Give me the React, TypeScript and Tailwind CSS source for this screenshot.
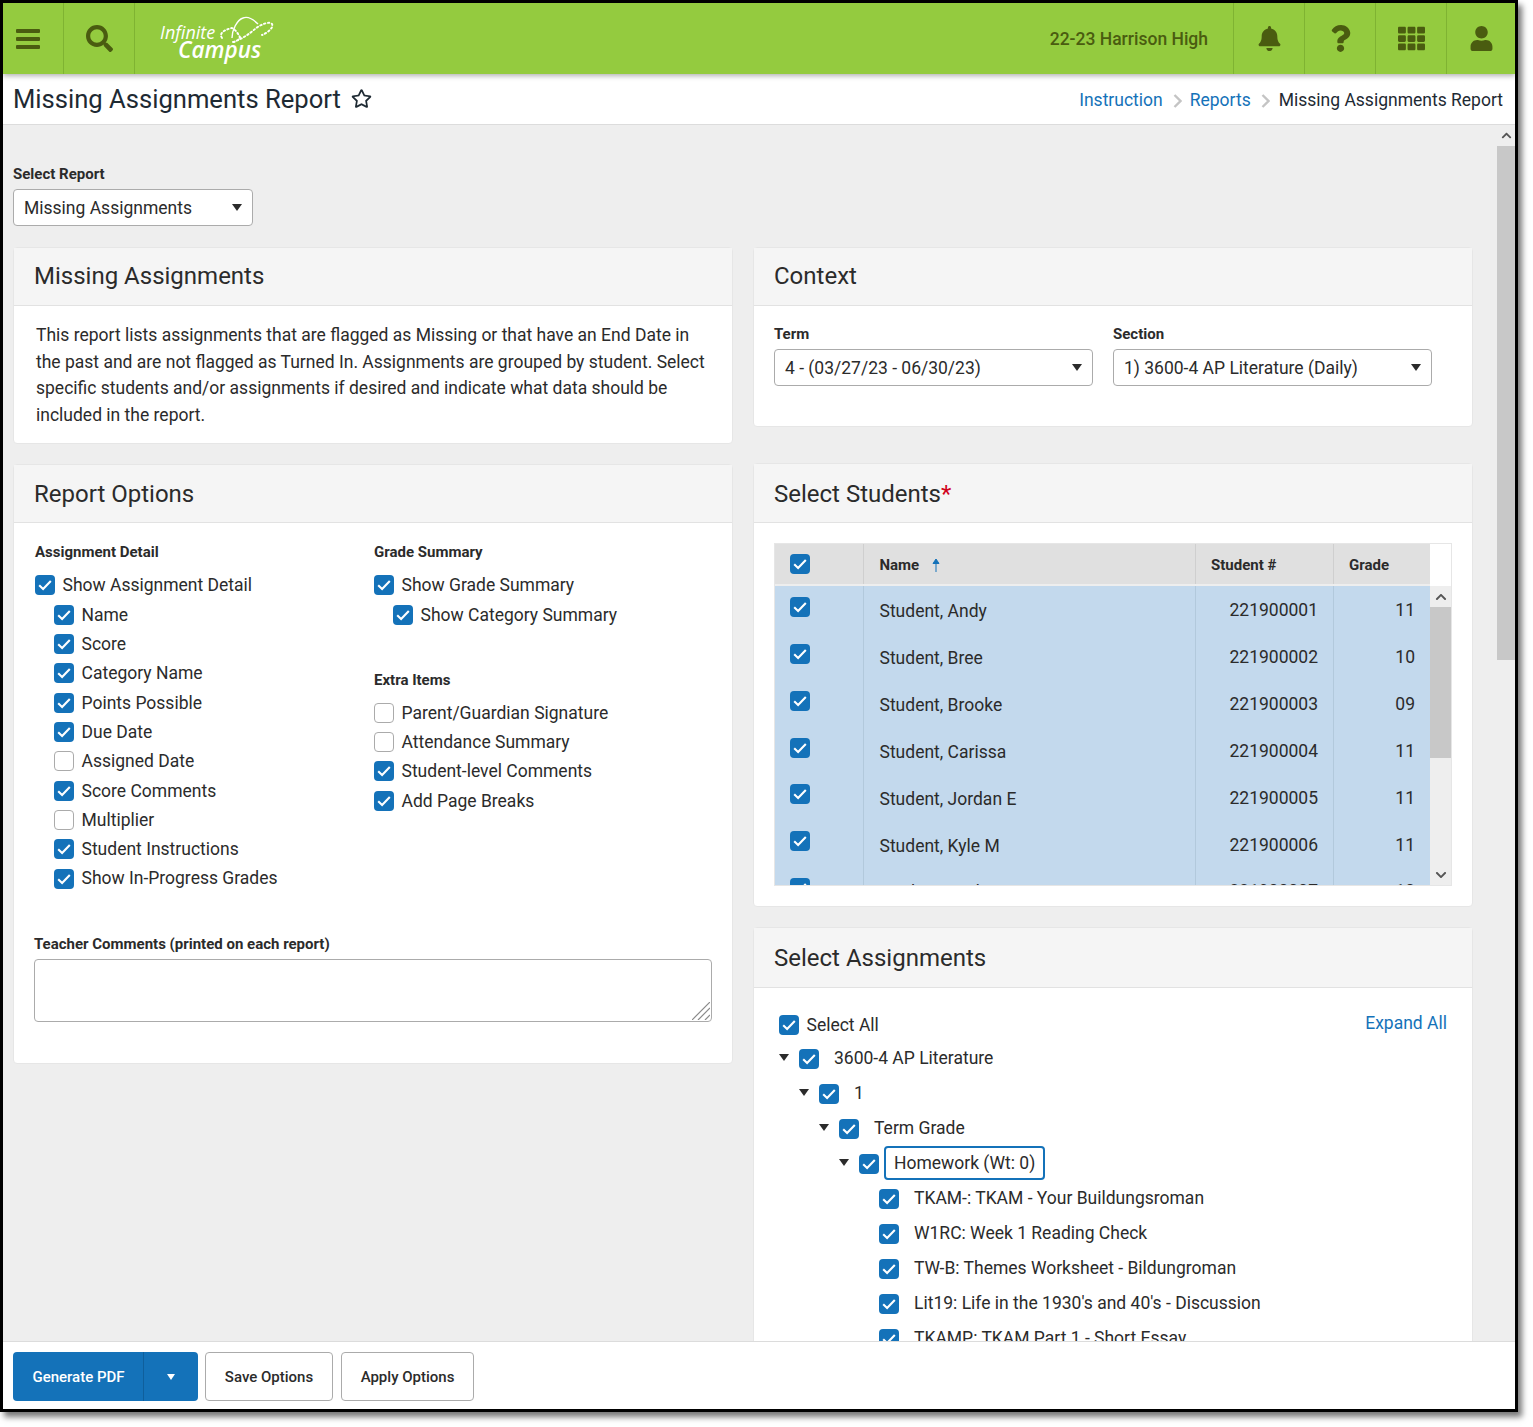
import {
  FaBell,
  FaChevronDown,
  FaChevronUp,
  FaQuestion,
  FaRegStar,
  FaSearch,
  FaTh,
  FaUser,
} from "react-icons/fa";
import type { ReactNode } from "react";

const Check = ({ on = true, className = "" }: { on?: boolean; className?: string }) => (
  <span
    className={`flex h-5 w-5 shrink-0 items-center justify-center rounded-[4px] ${
      on ? "bg-[#1472b9]" : "border border-[#ababab] bg-white"
    } ${className}`}
  >
    {on && (
      <svg viewBox="0 0 20 20" className="h-5 w-5">
        <path d="M4.2 10.3l3.9 3.7 7.7-8" fill="none" stroke="#fff" strokeWidth="2.1" />
      </svg>
    )}
  </span>
);

const Caret = ({ className = "" }: { className?: string }) => (
  <span
    className={`inline-block h-0 w-0 border-x-[5px] border-t-[7px] border-x-transparent border-t-[#2b2b2b] ${className}`}
  />
);

const Crumb = ({ className = "" }: { className?: string }) => (
  <svg viewBox="0 0 9 14" className={`h-[14px] w-[9px] ${className}`}>
    <path d="M1.5 1l6 6-6 6" fill="none" stroke="#c4c4c4" strokeWidth="2.4" />
  </svg>
);

const Select = ({ value, width }: { value: string; width: string }) => (
  <div
    className={`flex h-[37px] items-center justify-between rounded-[4px] border border-[#ababab] bg-white pl-[10px] pr-[10px] text-[17.5px] text-[#2b2b2b] ${width}`}
  >
    <span className="pt-px">{value}</span>
    <Caret />
  </div>
);

const Card = ({
  title,
  children,
  className = "",
  head = "h-[58px]",
}: {
  title: ReactNode;
  children: ReactNode;
  className?: string;
  head?: string;
}) => (
  <section className={`rounded-[4px] border border-[#e6e6e6] bg-white ${className}`}>
    <div className={`flex items-center border-b border-[#e2e2e2] bg-[#f5f5f5] px-5 text-[24px] text-[#2b2b2b] ${head}`}>
      {title}
    </div>
    {children}
  </section>
);

const Label = ({ children, className = "" }: { children: ReactNode; className?: string }) => (
  <div className={`text-[15px] font-bold leading-[18px] text-[#2b2b2b] ${className}`}>{children}</div>
);

const Opt = ({ label, on = true, sub = false }: { label: string; on?: boolean; sub?: boolean }) => (
  <div className={`flex h-[29.3px] items-center gap-[7.5px] text-[17.5px] text-[#2b2b2b] ${sub ? "pl-[19px]" : ""}`}>
    <Check on={on} />
    <span>{label}</span>
  </div>
);

const assignmentOpts: [string, boolean][] = [
  ["Name", true],
  ["Score", true],
  ["Category Name", true],
  ["Points Possible", true],
  ["Due Date", true],
  ["Assigned Date", false],
  ["Score Comments", true],
  ["Multiplier", false],
  ["Student Instructions", true],
  ["Show In-Progress Grades", true],
];

const students = [
  ["Student, Andy", "221900001", "11"],
  ["Student, Bree", "221900002", "10"],
  ["Student, Brooke", "221900003", "09"],
  ["Student, Carissa", "221900004", "11"],
  ["Student, Jordan E", "221900005", "11"],
  ["Student, Kyle M", "221900006", "11"],
  ["Student, Leah", "221900007", "10"],
];

const TreeRow = ({ indent, label, caret = false, focus = false }: { indent: string; label: string; caret?: boolean; focus?: boolean }) => (
  <div className={`flex h-[35px] items-center text-[17.5px] text-[#2b2b2b] ${indent}`}>
    <span className="flex w-5 shrink-0 items-center">{caret && <Caret className="-mt-[3px]" />}</span>
    <Check />
    {focus ? (
      <span className="-mt-[2px] ml-[5px] flex h-[34px] items-center rounded-[4px] border-2 border-[#1472b9] px-2">{label}</span>
    ) : (
      <span className="-mt-px ml-[15px]">{label}</span>
    )}
  </div>
);

const HeaderCell = ({ children, className = "" }: { children: ReactNode; className?: string }) => (
  <div className={`flex h-[71px] items-center justify-center border-l border-[#7fb332] ${className}`}>{children}</div>
);

const Logo = () => (
  <div className="relative ml-[25px] h-[71px] w-[120px] text-white" style={{ fontFamily: "'Open Sans', sans-serif" }}>
    <span className="absolute left-0 top-[23px] text-[18px] italic leading-[13px]">Infinite</span>
    <span className="absolute left-[18px] top-[38px] text-[22.5px] font-semibold italic leading-[18px]">Campus</span>
    <svg viewBox="0 0 62 32" className="absolute left-[55px] top-[11px] h-[32px] w-[62px]" fill="none" stroke="#fff">
      <path d="M17 24C17 16 22 6 28 4 33 2 39 6 43 10" strokeWidth="1.4" />
      <path
        d="M18 28C25 26 33 21 40 15 46 10 55 7 57 10 59 14 52 19 47 21M7 24C4 20 8 16 17 14 21 16 23 20 25 23 23 27 20 28 18 28"
        strokeWidth="1.9"
        strokeDasharray="1.5 2.5"
        strokeLinecap="round"
      />
    </svg>
  </div>
);

export default function App() {
  return (
    <div
      className="h-[1427px] w-[1533px] bg-white"
      style={{ fontFamily: "Roboto, 'Liberation Sans', sans-serif" }}
    >
      <div className="flex h-[1412px] w-[1518px] flex-col overflow-hidden border-[3px] border-black bg-white shadow-[4px_5px_6px_#777]">
        {/* top bar */}
        <header className="relative z-10 flex h-[71px] shrink-0 items-center bg-[#94cb3f] text-[#4a5c10] shadow-[0_2px_5px_rgba(0,0,0,0.3)]">
          <div className="flex h-[71px] w-[60px] items-center pl-[13px]">
            <svg viewBox="0 0 24 20" className="h-5 w-6" fill="currentColor">
              <rect width="24" height="4" rx="1" />
              <rect y="8" width="24" height="4" rx="1" />
              <rect y="16" width="24" height="4" rx="1" />
            </svg>
          </div>
          <HeaderCell className="w-[71px]">
            <FaSearch className="h-[27px] w-[27px]" />
          </HeaderCell>
          <HeaderCell className="w-auto">
            <Logo />
          </HeaderCell>
          <div className="ml-auto pr-[25px] pt-[2px] text-[17.5px] font-medium">22-23 Harrison High</div>
          <HeaderCell className="w-[71px]">
            <FaBell className="h-[25px] w-[25px]" />
          </HeaderCell>
          <HeaderCell className="w-[71px]">
            <FaQuestion className="h-[27px] w-[27px]" />
          </HeaderCell>
          <HeaderCell className="w-[71px]">
            <FaTh className="h-[27px] w-[27px]" />
          </HeaderCell>
          <HeaderCell className="w-[69px]">
            <FaUser className="h-[25px] w-[25px]" />
          </HeaderCell>
        </header>

        {/* title */}
        <div className="flex h-[51px] shrink-0 items-center justify-between border-b border-[#dcdcdc] bg-white pl-[10px] pr-[12px]">
          <div className="flex items-center gap-[10px] text-[25.6px] text-[#1e2a33]">
            <span>Missing Assignments Report</span>
            <FaRegStar className="h-[21px] w-[21px]" />
          </div>
          <div className="flex items-center pt-[3px] text-[17.5px]">
            <span className="text-[#1472b9]">Instruction</span>
            <Crumb className="ml-[10px] mr-[8px]" />
            <span className="text-[#1472b9]">Reports</span>
            <Crumb className="ml-[10px] mr-[9px]" />
            <span className="text-[#1e2a33]">Missing Assignments Report</span>
          </div>
        </div>

        {/* content */}
        <div className="flex min-h-0 flex-1 bg-[#eeeeee]">
          <main className="min-w-0 flex-1 overflow-hidden pl-[10px] pt-[40px]">
            <Label>Select Report</Label>
            <Select value="Missing Assignments" width="mt-[6px] w-[240px]" />
            <div className="mt-[21px] grid w-[1460px] grid-cols-2 items-start gap-x-5">
              <div className="flex flex-col gap-5">
                <Card title={<span className="-mt-[2px]">Missing Assignments</span>}>
                  <p className="px-[22px] pb-[14.7px] pt-[16.3px] text-[17.5px] leading-[26.4px] text-[#2b2b2b]">
                    This report lists assignments that are flagged as Missing or that have an End Date in the past and are not flagged as Turned In. Assignments are grouped by student. Select specific students and/or assignments if desired and indicate what data should be included in the report.
                  </p>
                </Card>
                <Card title={<span className="pt-px">Report Options</span>} className="h-[600px]">
                  <div className="px-5 pt-5">
                    <div className="grid grid-cols-2">
                      <div className="pl-px">
                        <Label>Assignment Detail</Label>
                        <div className="mt-[9.5px]">
                          <Opt label="Show Assignment Detail" />
                          <div className="mt-[0.8px]">
                            {assignmentOpts.map(([l, on]) => (
                              <Opt key={l} label={l} on={on} sub />
                            ))}
                          </div>
                        </div>
                      </div>
                      <div className="pl-px">
                        <Label>Grade Summary</Label>
                        <div className="mt-[9.5px]">
                          <Opt label="Show Grade Summary" />
                          <div className="mt-[0.8px]">
                            <Opt label="Show Category Summary" sub />
                          </div>
                        </div>
                        <Label className="mt-[41.7px]">Extra Items</Label>
                        <div className="mt-[9px]">
                          <Opt label="Parent/Guardian Signature" on={false} />
                          <Opt label="Attendance Summary" on={false} />
                          <Opt label="Student-level Comments" />
                          <Opt label="Add Page Breaks" />
                        </div>
                      </div>
                    </div>
                    <Label className="mt-[42.2px]">Teacher Comments (printed on each report)</Label>
                    <div className="relative mt-[5.5px] h-[63px] w-[678px]">
                      <textarea className="block h-full w-full resize-none rounded-[4px] border border-[#ababab] bg-white" />
                      <svg viewBox="0 0 18 18" className="absolute bottom-[2px] right-[2px] h-[18px] w-[18px]" stroke="#8a8a8a" strokeWidth="1.2">
                        <path d="M0 18L18 0M6 18L18 6M13 18L18 13" />
                      </svg>
                    </div>
                  </div>
                </Card>
              </div>

              <div className="flex flex-col gap-5">
                <Card title={<span className="-mt-[2px]">Context</span>} className="mb-4 h-[180px]">
                  <div className="grid grid-cols-2 px-5 pt-[19px]">
                    <div>
                      <Label>Term</Label>
                      <Select value="4 - (03/27/23 - 06/30/23)" width="mt-[6px] w-[319px]" />
                    </div>
                    <div>
                      <Label>Section</Label>
                      <Select value="1) 3600-4 AP Literature (Daily)" width="mt-[6px] w-[319px]" />
                    </div>
                  </div>
                </Card>

                <Card
                  title={<span className="pt-px">Select Students<span className="text-[#d0021b]">*</span></span>}
                  head="h-[59px]"
                  className="h-[444px]"
                >
                  <div className="px-5 pt-5">
                    <div className="flex h-[343px] w-[678px] border border-[#e6e6e6]">
                      <div className="min-w-0 flex-1">
                        <div className="flex h-[42px] items-center border-b-2 border-[#eeeeee] bg-[#e0e0e0] text-[15px] font-bold text-[#2b2b2b]">
                          <div className="flex h-full w-[89px] items-center border-r border-[#cfcfcf] pl-[15px]">
                            <Check />
                          </div>
                          <div className="flex h-full w-[332px] items-center gap-[12px] border-r border-[#cfcfcf] pl-[15.5px] pt-[2px]">
                            <span>Name</span>
                            <svg viewBox="0 0 10 14" className="h-[14px] w-[10px]">
                              <path d="M5 14V3M2 5.5L5 1l3 4.5z" stroke="#1472b9" fill="#1472b9" />
                            </svg>
                          </div>
                          <div className="flex h-full w-[138px] items-center border-r border-[#cfcfcf] pl-[15px] pt-[2px]">Student #</div>
                          <div className="pl-[15px] pt-[2px]">Grade</div>
                        </div>
                        <div className="h-[299px] overflow-hidden bg-[#c3d9ed] text-[17.5px] text-[#2b2b2b]">
                          {students.map(([name, id, grade]) => (
                            <div key={id} className="flex h-[46.85px]">
                              <div className="w-[89px] border-r border-[#b2c9dc] pl-[15px] pt-[11px]">
                                <Check />
                              </div>
                              <div className="flex w-[332px] items-center border-r border-[#b2c9dc] pl-[15.5px] pt-[4px]">{name}</div>
                              <div className="flex w-[138px] items-center justify-end border-r border-[#b2c9dc] pr-[15px] pt-[2px]">{id}</div>
                              <div className="flex flex-1 items-center justify-end pr-[15px] pt-[2px]">{grade}</div>
                            </div>
                          ))}
                        </div>
                      </div>
                      <div className="flex w-[21px] shrink-0 flex-col">
                        <div className="h-[42px] bg-white" />
                        <div className="flex h-[21px] items-center justify-center bg-[#eeeeee] text-[#555]">
                          <FaChevronUp className="h-3 w-3" />
                        </div>
                        <div className="h-[151px] bg-[#c8c8c8]" />
                        <div className="flex-1 bg-[#eeeeee]" />
                        <div className="flex h-[21px] items-center justify-center bg-[#eeeeee] text-[#555]">
                          <FaChevronDown className="h-3 w-3" />
                        </div>
                      </div>
                    </div>
                  </div>
                </Card>

                <Card title="Select Assignments" head="h-[60px]" className="h-[600px]">
                  <div className="relative pl-[25px] pt-[27px]">
                    <span className="absolute right-[25px] top-[22px] text-[17.5px] text-[#1472b9]">Expand All</span>
                    <div className="flex h-5 items-center gap-[7.5px] text-[17.5px] text-[#2b2b2b]">
                      <Check />
                      <span>Select All</span>
                    </div>
                    <div className="mt-[6.5px]">
                      <TreeRow indent="pl-0" label="3600-4 AP Literature" caret />
                      <TreeRow indent="pl-5" label="1" caret />
                      <TreeRow indent="pl-10" label="Term Grade" caret />
                      <TreeRow indent="pl-[60px]" label="Homework (Wt: 0)" caret focus />
                      <TreeRow indent="pl-20" label="TKAM-: TKAM - Your Buildungsroman" />
                      <TreeRow indent="pl-20" label="W1RC: Week 1 Reading Check" />
                      <TreeRow indent="pl-20" label="TW-B: Themes Worksheet - Bildungroman" />
                      <TreeRow indent="pl-20" label="Lit19: Life in the 1930's and 40's - Discussion" />
                      <TreeRow indent="pl-20" label="TKAMP: TKAM Part 1 - Short Essay" />
                    </div>
                  </div>
                </Card>
              </div>
            </div>
          </main>

          {/* page scrollbar */}
          <div className="flex w-[18px] shrink-0 flex-col">
            <div className="flex h-[21px] items-center justify-center text-[#555]">
              <FaChevronUp className="h-[11px] w-[11px]" />
            </div>
            <div className="h-[514px] bg-[#c8c8c8]" />
          </div>
        </div>

        {/* footer */}
        <footer className="flex h-[68px] shrink-0 items-center gap-[7px] border-t border-[#dcdcdc] bg-white pl-[10px] pt-[2px] text-[15px] font-medium text-[#2b2b2b]">
          <div className="flex h-[49px] w-[185px] items-center rounded-[4px] bg-[#1472b9] text-white">
            <span className="flex h-full w-[131px] items-center justify-center border-r border-[#0f5f9c] pl-px pt-px">Generate PDF</span>
            <span className="flex flex-1 items-center justify-center">
              <span className="h-0 w-0 border-x-[4px] border-t-[6px] border-x-transparent border-t-white" />
            </span>
          </div>
          <div className="flex h-[49px] w-[128px] items-center justify-center rounded-[4px] border border-[#ababab] pt-px">Save Options</div>
          <div className="ml-px flex h-[49px] w-[133px] items-center justify-center rounded-[4px] border border-[#ababab] pt-px">Apply Options</div>
        </footer>
      </div>
    </div>
  );
}
